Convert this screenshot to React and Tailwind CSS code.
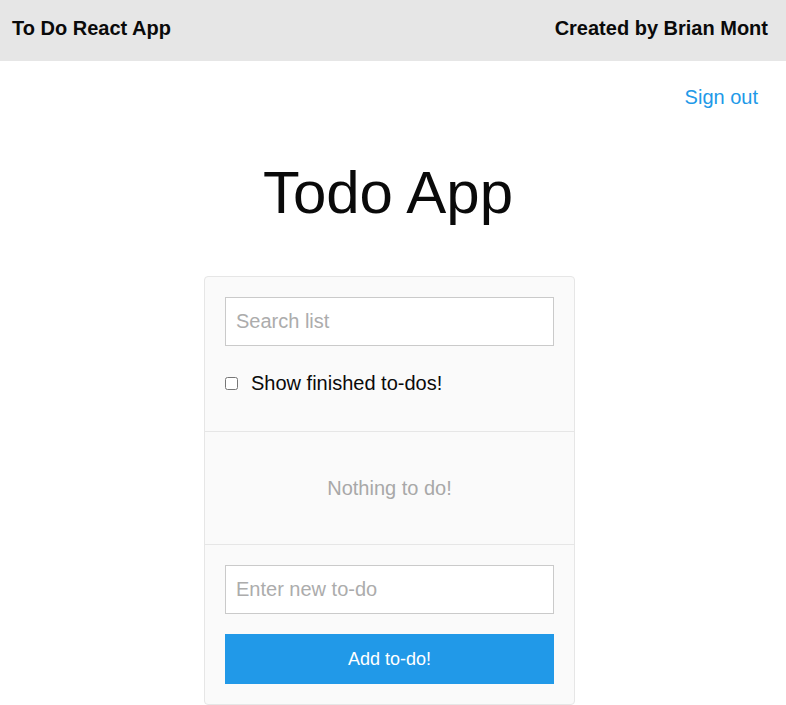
import React, { useState } from "react";

function App() {
  const [search, setSearch] = useState("");
  const [todo, setTodo] = useState("");
  const [showDone, setShowDone] = useState(false);

  return (
    <div className="min-h-screen bg-white text-[#0a0a0a] font-['Liberation_Sans',Arial,sans-serif]">
      <header className="flex h-[61px] items-center justify-between bg-[#e6e6e6] pl-3 pr-[18px] pb-[5px]">
        <span className="text-[20px] font-bold">To Do React App</span>
        <span className="text-[20px] font-bold">Created by Brian Mont</span>
      </header>

      <div className="pr-[10px]">
        <div className="mt-[21px] pr-[18px] text-right">
          <a href="#" className="text-[20px] leading-[30px] text-[#2199e8]">
            Sign out
          </a>
        </div>

        <h1 className="mt-[40px] text-center text-[60px] leading-[82px] font-normal">Todo App</h1>

        <div className="mt-[42px] ml-[204px] w-[371px] rounded-[4px] border border-[#e6e6e6] bg-[#fafafa]">
          <div className="border-b border-[#e6e6e6] px-5 pt-5 pb-[30px]">
            <input
              value={search}
              onChange={(e) => setSearch(e.target.value)}
              placeholder="Search list"
              className="block h-[49px] w-full border border-[#cacaca] bg-white px-[10px] text-[20px] outline-none placeholder:text-[#acacac]"
            />
            <label className="mt-[20px] flex items-center gap-[13px] text-[20px] leading-[35px]">
              <input
                type="checkbox"
                checked={showDone}
                onChange={(e) => setShowDone(e.target.checked)}
                className="h-[13px] w-[13px] accent-[#dddddd]"
              />
              Show finished to-dos!
            </label>
          </div>

          <div className="flex h-[113px] items-center justify-center border-b border-[#e6e6e6] text-[20px] text-[#a8a8a8]">
            Nothing to do!
          </div>

          <div className="px-5 pt-5 pb-5">
            <input
              value={todo}
              onChange={(e) => setTodo(e.target.value)}
              placeholder="Enter new to-do"
              className="block h-[49px] w-full border border-[#cacaca] bg-white px-[10px] text-[20px] outline-none placeholder:text-[#acacac]"
            />
            <button
              type="button"
              className="mt-[20px] block h-[50px] w-full bg-[#2199e8] text-[18px] text-white"
            >
              Add to-do!
            </button>
          </div>
        </div>
      </div>
    </div>
  );
}

export default App;
